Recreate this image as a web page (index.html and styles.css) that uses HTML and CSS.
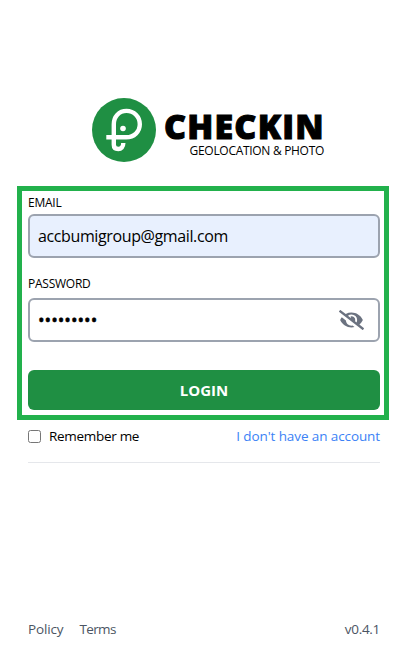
FILE: index.html
```html
<!DOCTYPE html>
<html lang="en">
<head>
<meta charset="utf-8">
<meta name="viewport" content="width=device-width, initial-scale=1">
<title>Checkin</title>
<link rel="stylesheet" href="styles.css">
</head>
<body>
<main class="page">
  <header class="brand">
    <svg class="logo" viewBox="0 0 64 64" aria-hidden="true">
      <circle cx="32" cy="32" r="32" fill="#1f8f43"/>
      <g fill="none" stroke="#fff" stroke-width="4.400" stroke-linecap="butt">
        <path d="M14.300 39.300H34.300C42 39.300 47.800 33.800 47.800 26.300S42 12.900 34.500 12.900 21.800 18.500 21.800 26.200V46.700C21.800 49.500 23.500 51 26.300 51S31.300 49 31.300 45"/>
      </g>
      <circle cx="31" cy="30.500" r="2.800" fill="#fff"/>
    </svg>
    <div class="brand-text">
      <h1 class="brand-name">CHECKIN</h1>
      <p class="tagline">GEOLOCATION &amp; PHOTO</p>
    </div>
  </header>
  <form class="login">
    <div class="panel">
      <label class="label" for="email">EMAIL</label>
      <input class="input filled" id="email" type="text" value="accbumigroup@gmail.com">
      <label class="label second" for="password">PASSWORD</label>
      <div class="input password" id="password">
        <span class="dots">•••••••••</span>
        <svg class="eye" viewBox="0 0 640 512" aria-hidden="true"><path fill="#6b7280" d="M320 400c-75.850 0-137.250-58.710-142.900-133.110L72.200 185.820c-13.790 17.300-26.480 35.590-36.720 55.590a32.350 32.350 0 0 0 0 29.190C89.710 376.410 197.070 448 320 448c26.910 0 52.870-4 77.890-10.460L346 397.390a144.130 144.130 0 0 1-26 2.610zm313.820 58.100l-110.550-85.440a331.250 331.250 0 0 0 81.250-102.070 32.350 32.350 0 0 0 0-29.190C550.290 135.590 442.930 64 320 64a308.150 308.150 0 0 0-147.320 37.700L45.460 3.370A16 16 0 0 0 23 6.180L3.370 31.450A16 16 0 0 0 6.180 53.900l588.360 454.730a16 16 0 0 0 22.460-2.810l19.640-25.270a16 16 0 0 0-2.820-22.450zM450.140 317.400l-39.300-30.380A94.750 94.750 0 0 0 416 256a94.760 94.760 0 0 0-121.310-92.210A47.650 47.650 0 0 1 304 192a46.640 46.640 0 0 1-1.540 10l-73.610-56.890A142.310 142.310 0 0 1 320 112a143.920 143.920 0 0 1 144 144c0 21.630-5.290 41.790-13.860 60.400z"/></svg>
      </div>
      <button class="submit" type="button"><span>LOGIN</span></button>
    </div>
    <div class="options">
      <label class="remember"><input class="check" type="checkbox"><span>Remember me</span></label>
      <a class="signup">I don't have an account</a>
    </div>
  </form>
  <footer class="footer">
    <a class="policy">Policy</a>
    <a class="terms">Terms</a>
    <span class="version">v0.4.1</span>
  </footer>
</main>
</body>
</html>
```
FILE: styles.css
```css
* { box-sizing: border-box; }
body { margin: 0; background: #fff; color: #000; font-family: "Open Sans", "Noto Sans", sans-serif; }
.page { width: 410px; height: 655px; padding-top: 98px; display: flex; flex-direction: column; }
.brand { display: flex; gap: 8px; padding-left: 92px; height: 64px; }
.logo { width: 64px; height: 64px; flex: none; }
.brand-text { width: 160px; padding-top: 14px; display: flex; flex-direction: column; white-space: nowrap; }
.brand-name { margin: 0; height: 32px; font: 800 34px/28px "Open Sans", sans-serif; letter-spacing: 1.200px; -webkit-text-stroke: 1px #000; }
.tagline { margin: 0; align-self: flex-end; font-size: 12px; line-height: 14px; letter-spacing: -0.3px; }
.login { margin: 24px 21px 0 17px; }
.panel { height: 234px; border: 5px solid #22b14c; padding: 4px 4px 5px 6px; display: flex; flex-direction: column; }
.label { font-size: 12px; line-height: 16px; height: 19px; letter-spacing: -0.25px; }
.second { margin-top: 18px; height: 22px; }
.input { width: 352px; height: 44px; flex: none; padding: 0 8px; border: 2px solid #9ca3af; border-radius: 6px; background: #fff; color: #000; font: 16px "Open Sans", sans-serif; }
.filled { background: #e8f0fe; letter-spacing: -0.38px; }
.password { display: flex; align-items: center; justify-content: space-between; }
.dots { font-size: 17.500px; -webkit-text-stroke: 0.5px #000; }
.eye { width: 25px; height: 20px; margin-right: 6px; }
.submit { width: 352px; height: 40px; flex: none; margin-top: 28px; padding: 0 0 1px; border: 0; border-radius: 6px; background: #1f8f43; color: #fff; font: 700 15px/20px "Open Sans", sans-serif; }
.options { display: flex; justify-content: space-between; height: 43px; margin: 0 4px 0 11px; padding-top: 6px; width: 352px; border-bottom: 1px solid #e5e7eb; font-size: 13.500px; line-height: 20px; }
.remember { display: flex; align-items: flex-start; gap: 8px; letter-spacing: -0.3px; }
.check { width: 13px; height: 13px; margin: 4px 0 0; }
.signup { color: #3b82f6; letter-spacing: -0.1px; }
.footer { display: flex; gap: 16px; margin: auto 30px 16px 28px; font-size: 13.500px; line-height: 20px; color: #4b5563; }
.policy { letter-spacing: -0.15px; }
.terms { letter-spacing: -0.6px; }
.version { margin-left: auto; letter-spacing: -0.3px; }
```
